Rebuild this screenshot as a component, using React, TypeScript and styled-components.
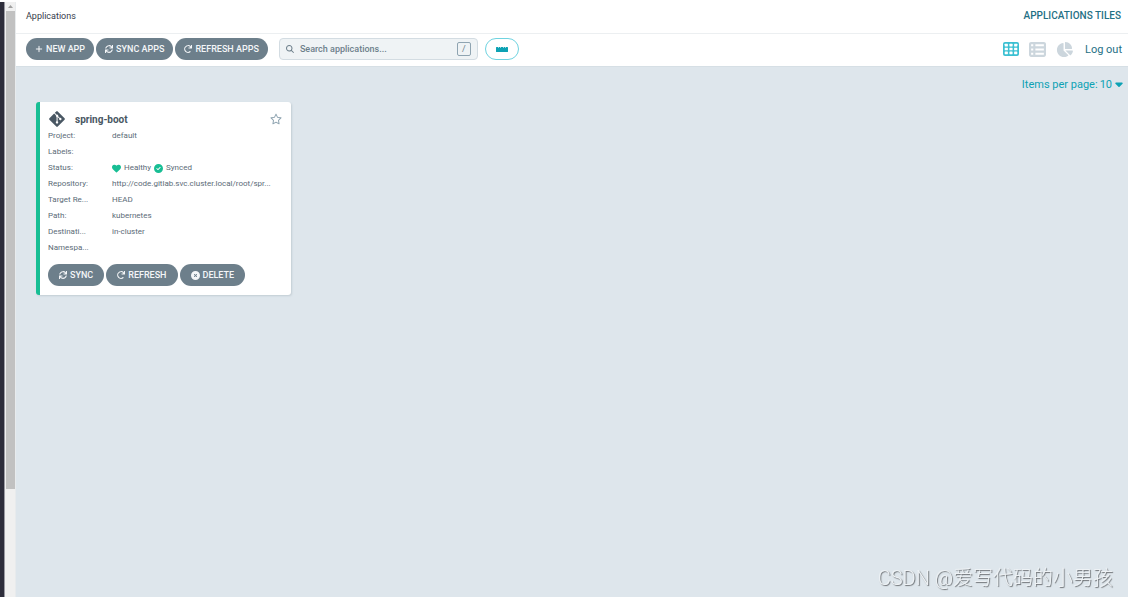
import React from "react";
import styled, { createGlobalStyle, css } from "styled-components";
import { FaRedo, FaSync } from "react-icons/fa";
import {
  FaCaretDown,
  FaChartPie,
  FaCircleCheck,
  FaCircleXmark,
  FaGitAlt,
  FaHeart,
  FaMagnifyingGlass,
  FaPlus,
  FaRegStar,
  FaTableList,
} from "react-icons/fa6";

const GlobalStyle = createGlobalStyle`
  *, *::before, *::after { box-sizing: border-box; }
  body {
    margin: 0;
    background: #dee6ec;
    color: #495763;
    font-family: Roboto, "Noto Sans CJK SC", sans-serif;
    font-size: 9px;
  }
  button, input, select { font: inherit; color: inherit; margin: 0; }
  a { color: inherit; text-decoration: none; }
`;

const Shell = styled.div`
  display: grid;
  grid-template-columns: 5px 11px minmax(0, 1fr);
  min-height: 100vh;
  border-top: 2px solid #fff;
`;

const NavEdge = styled.div`
  background: #2d2d3b;
  border-right: 1px solid #9a9aa2;
`;

const ScrollTrack = styled.div`
  display: flex;
  flex-direction: column;
  align-items: center;
  background: #f0f0f0;
  border-right: 1px solid #e8ebed;
`;

const ScrollUp = styled.div`
  display: grid;
  place-items: center;
  height: 9px;
  svg { display: block; }
`;

const ScrollThumb = styled.div`
  width: 9px;
  height: 80vh;
  background: #c1c1c1;
`;

const Page = styled.div`
  min-width: 0;
`;

const TopBar = styled.header`
  display: flex;
  align-items: center;
  justify-content: space-between;
  height: 32px;
  padding: 0 7px 4px 10px;
  background: #fff;
  border-bottom: 1px solid #eceff1;
`;

const Breadcrumb = styled.a`
  color: #363c4a;
`;

const PageTitle = styled.h1`
  margin: 0;
  font-size: 10px;
  font-weight: 500;
  color: #1f7085;
`;

const Toolbar = styled.div`
  display: flex;
  align-items: center;
  height: 32px;
  padding: 0 6px 2px 10px;
  background: #fff;
`;

const ButtonRow = styled.div`
  display: flex;
  gap: 2px;
`;

const PillButton = styled.button<{ $compact?: boolean }>`
  display: flex;
  align-items: center;
  justify-content: center;
  gap: ${(p) => (p.$compact ? 3 : 3)}px;
  height: 22px;
  padding: 0 ${(p) => (p.$compact ? 11 : 9)}px;
  border: 0;
  border-radius: 11px;
  background: #6d7f8b;
  color: #f4f6f8;
  font-weight: 500;
  white-space: nowrap;
`;

const SearchBox = styled.label`
  display: flex;
  align-items: center;
  gap: 6px;
  width: 199px;
  height: 22px;
  margin: 0 7px 0 11px;
  padding: 0 6px;
  border: 1px solid #d3dce2;
  border-radius: 4px;
  background: #eff3f5;
  color: #6d7f8b;
`;

const SearchInput = styled.input`
  flex: 1;
  min-width: 0;
  padding: 0;
  border: 0;
  outline: 0;
  background: none;
  font-weight: 500;
  &::placeholder { color: #6d7f8b; opacity: 1; }
`;

const KeyHint = styled.kbd`
  width: 14px;
  height: 14px;
  border: 1px solid #8fa4b1;
  border-radius: 2px;
  font-family: inherit;
  font-size: 9px;
  line-height: 12px;
  text-align: center;
`;

const HealthToggle = styled.button`
  display: grid;
  place-items: center;
  width: 34px;
  height: 22px;
  padding: 0;
  border: 1px solid #6fd3e0;
  border-radius: 11px;
  background: #fff;
  color: #0da2b4;
`;

const ViewSwitch = styled.nav`
  display: flex;
  align-items: center;
  gap: 10px;
  margin-left: auto;
`;

const ViewButton = styled.button<{ $active?: boolean }>`
  display: flex;
  padding: 0;
  border: 0;
  background: none;
  color: ${(p) => (p.$active ? "#3bc0d2" : "#ccd6dd")};
`;

const LogOut = styled.a`
  margin-left: 2px;
  font-size: 11px;
  color: #1f7085;
`;

const Main = styled.main`
  padding: 10px 4px 0 20px;
  border-top: 1px solid #d6dfe5;
`;

const Pager = styled.label`
  display: flex;
  align-items: center;
  justify-content: flex-end;
  gap: 2px;
  height: 14px;
  margin-bottom: 11px;
  font-size: 11px;
  color: #0da2b4;
  svg { margin: 0 -1px; }
`;

const PageSize = styled.select`
  appearance: none;
  padding: 0;
  border: 0;
  background: none;
  field-sizing: content;
`;

const Tiles = styled.div`
  display: grid;
  grid-template-columns: repeat(auto-fill, 255px);
  gap: 16px;
`;

const Tile = styled.article`
  padding: 8px 9px 9px 8px;
  border-left: 4px solid #18be94;
  border-radius: 3px;
  background: #fff;
  box-shadow: 1px 1px 2px #c3cdd4;
`;

const TileHead = styled.div`
  display: flex;
  align-items: center;
  height: 18px;
`;

const TileName = styled.h2`
  flex: 1;
  margin: 0 0 0 9px;
  font-size: 10px;
  font-weight: 700;
  color: #495763;
`;

const StarButton = styled.button`
  display: flex;
  padding: 0;
  border: 0;
  background: none;
  color: #8fa4b1;
`;

const Details = styled.dl`
  display: grid;
  grid-template-columns: 43px minmax(0, 1fr);
  column-gap: 21px;
  grid-auto-rows: 16px;
  margin: 0 0 8px;
  font-size: 8px;
  line-height: 16px;
  color: #5b6b77;
`;

const clip = css`
  overflow: hidden;
  text-overflow: ellipsis;
  white-space: nowrap;
`;

const Term = styled.dt`
  ${clip}
`;

const Value = styled.dd`
  margin: 0;
  ${clip}
`;

const Statuses = styled.span`
  display: flex;
  align-items: center;
  gap: 3px;
  svg { color: #18be94; }
`;

const Watermark = styled.div`
  position: fixed;
  right: 15px;
  bottom: 6px;
  font-size: 20px;
  font-weight: 300;
  line-height: 26px;
  color: #eef2f5;
  text-shadow: 1px 1px 1px #6b6f73;
`;

const TilesIcon = () => (
  <svg width="16" height="14" viewBox="0 0 16 14">
    <rect width="16" height="14" rx="2" fill="currentColor" />
    <g fill="#fff">
      {[1.8, 5.7, 9.6].map((y) =>
        [1.7, 6.4, 11.1].map((x) => (
          <rect key={`${x}-${y}`} x={x} y={y} width="3.2" height="2.6" rx="0.4" />
        )),
      )}
    </g>
  </svg>
);

const RulerIcon = () => (
  <svg width="12" height="5" viewBox="0 0 12 5">
    <path
      d="M.6 0H2v1h.6V0h1.6v1h.6V0h2.4v1h.6V0h1.6v1h.6V0h1.4q.6 0 .6.6v3.8q0 .6-.6.6H.6Q0 5 0 4.4V.6Q0 0 .6 0z"
      fill="currentColor"
    />
  </svg>
);

const rows: [string, React.ReactNode][] = [
  ["Project:", "default"],
  ["Labels:", ""],
  [
    "Status:",
    <Statuses key="status">
      <FaHeart size={9} /> Healthy <FaCircleCheck size={9} /> Synced
    </Statuses>,
  ],
  ["Repository:", "http://code.gitlab.svc.cluster.local/root/spr..."],
  ["Target Re...", "HEAD"],
  ["Path:", "kubernetes"],
  ["Destinati...", "in-cluster"],
  ["Namespa...", ""],
];

export default function App() {
  return (
    <>
      <GlobalStyle />
      <Shell>
        <NavEdge />
        <ScrollTrack>
          <ScrollUp>
            <svg width="5" height="3" viewBox="0 0 5 3">
              <path d="M0 3 2.5 0 5 3z" fill="#a0a0a0" />
            </svg>
          </ScrollUp>
          <ScrollThumb />
        </ScrollTrack>
        <Page>
          <TopBar>
            <Breadcrumb href="#applications">Applications</Breadcrumb>
            <PageTitle>APPLICATIONS TILES</PageTitle>
          </TopBar>
          <Toolbar>
            <ButtonRow>
              <PillButton><FaPlus size={8} />NEW APP</PillButton>
              <PillButton><FaSync size={8} />SYNC APPS</PillButton>
              <PillButton><FaRedo size={8} />REFRESH APPS</PillButton>
            </ButtonRow>
            <SearchBox>
              <FaMagnifyingGlass size={8} />
              <SearchInput aria-label="Search applications" placeholder="Search applications..." />
              <KeyHint>/</KeyHint>
            </SearchBox>
            <HealthToggle aria-label="Toggle health status bar">
              <RulerIcon />
            </HealthToggle>
            <ViewSwitch>
              <ViewButton $active aria-label="Tiles"><TilesIcon /></ViewButton>
              <ViewButton aria-label="List"><FaTableList size={17} /></ViewButton>
              <ViewButton aria-label="Summary"><FaChartPie size={17} /></ViewButton>
              <LogOut href="#logout">Log out</LogOut>
            </ViewSwitch>
          </Toolbar>
          <Main>
            <Pager>
              Items per page:
              <PageSize defaultValue="10">
                <option>5</option>
                <option>10</option>
                <option>15</option>
                <option>20</option>
              </PageSize>
              <FaCaretDown size={12} />
            </Pager>
            <Tiles>
              <Tile>
                <TileHead>
                  <FaGitAlt size={18} />
                  <TileName>spring-boot</TileName>
                  <StarButton aria-label="Favorite"><FaRegStar size={12} /></StarButton>
                </TileHead>
                <Details>
                  {rows.map(([term, value]) => (
                    <React.Fragment key={term}>
                      <Term>{term}</Term>
                      <Value>{value}</Value>
                    </React.Fragment>
                  ))}
                </Details>
                <ButtonRow>
                  <PillButton $compact><FaSync size={8} />SYNC</PillButton>
                  <PillButton $compact><FaRedo size={8} />REFRESH</PillButton>
                  <PillButton $compact><FaCircleXmark size={9} />DELETE</PillButton>
                </ButtonRow>
              </Tile>
            </Tiles>
          </Main>
        </Page>
      </Shell>
      <Watermark>CSDN @爱写代码的小男孩</Watermark>
    </>
  );
}
